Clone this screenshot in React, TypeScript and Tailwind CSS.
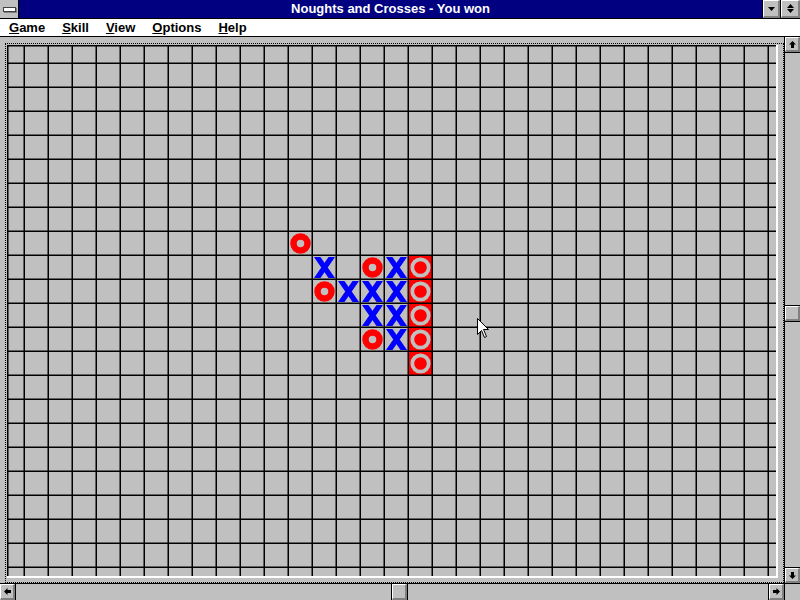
import React from 'react';

type Mark = 'o' | 'x' | 'win';

// board cells: column c sits between x=24c and 24c+24, row r between y=24r+15 and 24r+39
const moves: { c: number; r: number; m: Mark }[] = [
  { c: 12, r: 9, m: 'o' },
  { c: 13, r: 10, m: 'x' },
  { c: 15, r: 10, m: 'o' },
  { c: 16, r: 10, m: 'x' },
  { c: 17, r: 10, m: 'win' },
  { c: 13, r: 11, m: 'o' },
  { c: 14, r: 11, m: 'x' },
  { c: 15, r: 11, m: 'x' },
  { c: 16, r: 11, m: 'x' },
  { c: 17, r: 11, m: 'win' },
  { c: 15, r: 12, m: 'x' },
  { c: 16, r: 12, m: 'x' },
  { c: 17, r: 12, m: 'win' },
  { c: 15, r: 13, m: 'o' },
  { c: 16, r: 13, m: 'x' },
  { c: 17, r: 13, m: 'win' },
  { c: 17, r: 14, m: 'win' },
];

const cols = Array.from({ length: 32 }, (_, i) => 24 * (i + 1));
const rows = Array.from({ length: 22 }, (_, i) => 24 * (i + 2) + 15);

const Board = () => (
  <svg width={771} height={533} viewBox="7 45 771 533" className="block">
    <rect x={7} y={45} width={771} height={533} fill="#c0c0c0" />
    {moves
      .filter(p => p.m === 'win')
      .map(p => (
        <rect key={`f${p.c}-${p.r}`} x={24 * p.c + 1} y={24 * p.r + 16} width={23} height={23} fill="#ff0000" />
      ))}
    <rect x={7} y={45} width={1.5} height={531} fill="#000" />
    <rect x={7} y={45} width={769} height={1.5} fill="#000" />
    {cols.map(x => (
      <rect key={`v${x}`} x={x - 0.5} y={45} width={1.5} height={531} fill="#000" />
    ))}
    {rows.map(y => (
      <rect key={`h${y}`} x={7} y={y - 0.5} width={769} height={1.5} fill="#000" />
    ))}
    <rect x={776} y={45} width={2} height={533} fill="#fff" />
    <rect x={7} y={576} width={771} height={2} fill="#fff" />
    {moves.map(p => (
      <g key={`${p.c}-${p.r}`} transform={`translate(${24 * p.c} ${24 * p.r + 15})`}>
        {p.m === 'o' && <circle cx={12.5} cy={12.5} r={7} fill="none" stroke="#ff0000" strokeWidth={6.5} />}
        {p.m === 'win' && <circle cx={12.5} cy={12.5} r={8.2} fill="none" stroke="#c0c0c0" strokeWidth={3.8} />}
        {p.m === 'x' && (
          <g fill="#0000ff">
            <polygon points="2,2 8.5,2 23,23 16.5,23" />
            <polygon points="16.5,2 23,2 8.5,23 2,23" />
          </g>
        )}
      </g>
    ))}
  </svg>
);

const Bevel = ({ children, className = '' }: { children?: React.ReactNode; className?: string }) => (
  <div
    className={`bg-[#c0c0c0] border-t border-l border-t-white border-l-white border-b-2 border-r-2 border-b-[#808080] border-r-[#808080] flex items-center justify-center ${className}`}
  >
    {children}
  </div>
);

const Arrow = ({ dir }: { dir: 'up' | 'down' | 'left' | 'right' }) => {
  const rot = { up: 0, right: 90, down: 180, left: 270 }[dir];
  return (
    <svg width={7} height={7} viewBox="0 0 7 7" style={{ transform: `rotate(${rot}deg)` }}>
      <polygon points="3.5,0 7,3.5 5,3.5 5,7 2,7 2,3.5 0,3.5" fill="#000" />
    </svg>
  );
};

const Tri = ({ up }: { up?: boolean }) => (
  <svg width={7} height={4} viewBox="0 0 7 4">
    <polygon points={up ? '3.5,0 7,4 0,4' : '0,0 7,0 3.5,4'} fill="#000" />
  </svg>
);

const menus = ['Game', 'Skill', 'View', 'Options', 'Help'];

export default function App() {
  return (
    <div className="relative w-[800px] h-[600px] overflow-hidden bg-[#c0c0c0] flex flex-col font-['Liberation_Sans',Arial,sans-serif] select-none">
      {/* caption */}
      <div className="h-[19px] flex border-b border-black shrink-0">
        <div className="w-[19px] border-r border-black bg-[#c0c0c0] flex items-center justify-center">
          <div className="w-[13px] h-[5px] bg-white border border-[#404040] shadow-[1px_1px_0_#808080]" />
        </div>
        <div className="flex-1 bg-[#000080] text-white font-bold text-[13px] leading-[18px] text-center">
          Noughts and Crosses - You won
        </div>
        <div className="w-[18px] border-l border-black flex">
          <Bevel className="flex-1">
            <Tri />
          </Bevel>
        </div>
        <div className="w-[20px] border-l border-black flex">
          <Bevel className="flex-1 flex-col gap-[1px]">
            <Tri up />
            <Tri />
          </Bevel>
        </div>
      </div>

      {/* menu bar */}
      <div className="h-[18px] bg-white border-b border-black shrink-0 flex items-center pl-[9px] gap-[17px] text-[13px] font-bold leading-[17px] text-black">
        {menus.map(m => (
          <span key={m}>
            <u>{m[0]}</u>
            {m.slice(1)}
          </span>
        ))}
      </div>

      <div className="flex-1 flex min-h-0">
        {/* client area */}
        <div className="flex-1 flex flex-col pl-[5px] pt-[6px]">
          <div className="flex-1 border border-dotted border-black p-[1px]">
            <Board />
          </div>
        </div>

        {/* vertical scroll bar */}
        <div className="w-[16px] border-l border-black flex flex-col">
          <div className="h-[16px] border-b border-black flex">
            <Bevel className="flex-1">
              <Arrow dir="up" />
            </Bevel>
          </div>
          <div className="flex-1 bg-[#c0c0c0]">
            <div className="mt-[252px] h-[17px] border-y border-black flex">
              <Bevel className="flex-1" />
            </div>
          </div>
          <div className="h-[16px] border-t border-black flex">
            <Bevel className="flex-1">
              <Arrow dir="down" />
            </Bevel>
          </div>
        </div>
      </div>

      {/* horizontal scroll bar */}
      <div className="h-[17px] border-t border-black flex shrink-0">
        <div className="w-[16px] border-r border-black flex">
          <Bevel className="flex-1">
            <Arrow dir="left" />
          </Bevel>
        </div>
        <div className="flex-1 bg-[#c0c0c0] flex">
          <div className="ml-[375px] w-[17px] border-x border-black flex">
            <Bevel className="flex-1" />
          </div>
        </div>
        <div className="w-[16px] border-l border-black flex">
          <Bevel className="flex-1">
            <Arrow dir="right" />
          </Bevel>
        </div>
        <div className="w-[16px] border-l border-black bg-[#c0c0c0]" />
      </div>

      {/* mouse pointer */}
      <svg width={13} height={21} viewBox="0 0 13 21" className="absolute left-[477px] top-[318px]">
        <path d="M0.5 0.5 L0.5 16.5 L4.5 12.5 L7.5 19.5 L9.5 18.5 L6.5 11.5 L11.5 11.5 Z" fill="#fff" stroke="#000" strokeWidth={1} />
      </svg>
    </div>
  );
}
